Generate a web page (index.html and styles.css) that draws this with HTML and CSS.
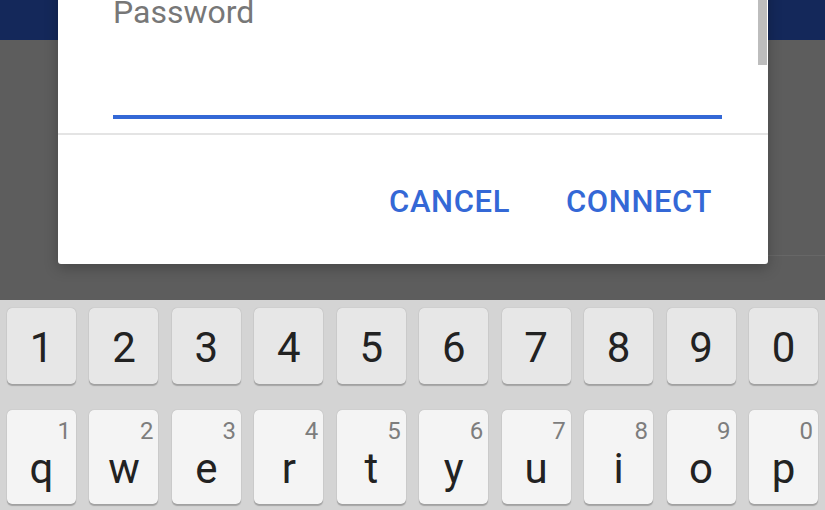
FILE: index.html
```html
<!DOCTYPE html>
<html lang="en">
<head>
  <meta charset="UTF-8" />
  <meta name="viewport" content="width=device-width, initial-scale=1.0"/>
  <title>Wi-Fi Password</title>
  <link rel="stylesheet" href="styles.css">
</head>
<body>
  <div class="screen">
    <header class="appbar"></header>
    <main class="content">
      <div class="content-rule"></div>
    </main>

    <!-- Connect dialog, floats over the dimmed page -->
    <div class="dialog">
      <div class="dialog-body">
        <label class="field-label" for="pw">Password</label>
        <div class="field-input" id="pw"></div>
      </div>
      <div class="dialog-divider"></div>
      <div class="dialog-actions">
        <button class="dialog-btn">CANCEL</button>
        <button class="dialog-btn">CONNECT</button>
      </div>
      <div class="scroll-thumb"></div>
    </div>

    <div class="keyboard">
      <div class="key-row numbers">
        <div class="key">1</div>
        <div class="key">2</div>
        <div class="key">3</div>
        <div class="key">4</div>
        <div class="key">5</div>
        <div class="key">6</div>
        <div class="key">7</div>
        <div class="key">8</div>
        <div class="key">9</div>
        <div class="key">0</div>
      </div>
      <div class="key-row letters">
        <div class="key"><span class="hint">1</span><span class="char">q</span></div>
        <div class="key"><span class="hint">2</span><span class="char">w</span></div>
        <div class="key"><span class="hint">3</span><span class="char">e</span></div>
        <div class="key"><span class="hint">4</span><span class="char">r</span></div>
        <div class="key"><span class="hint">5</span><span class="char">t</span></div>
        <div class="key"><span class="hint">6</span><span class="char">y</span></div>
        <div class="key"><span class="hint">7</span><span class="char">u</span></div>
        <div class="key"><span class="hint">8</span><span class="char">i</span></div>
        <div class="key"><span class="hint">9</span><span class="char">o</span></div>
        <div class="key"><span class="hint">0</span><span class="char">p</span></div>
      </div>
    </div>
  </div>
</body>
</html>
```

FILE: styles.css
```css
  body {
    margin: 0;
    font-family: 'Roboto', 'Noto Sans', sans-serif;
    background-color: #5d5d5d;
  }

  .screen {
    width: 825px;
    height: 510px;
    position: relative;
    overflow: hidden;
  }

  .appbar {
    height: 40px;
    background-color: #14285a;
  }

  .content {
    height: 260px;
    box-sizing: border-box;
    padding-top: 215px;
    background-color: #5d5d5d;
  }

  .content-rule {
    margin-left: 640px;
    height: 1px;
    background-color: #676767;
  }

  /* Dialog */
  .dialog {
    position: absolute;
    left: 58px;
    top: -24px;
    width: 710px;
    background-color: #fff;
    border-radius: 0 0 3px 3px;
    box-shadow: 0 4px 14px rgba(0,0,0,0.25);
  }

  .dialog-body {
    padding: 21px 46px 0 55px;
  }

  .field-label {
    display: block;
    font-size: 32px;
    line-height: 31px;
    color: #777;
  }

  .field-input {
    height: 87px;
    border-bottom: 4px solid #3468d6;
  }

  .dialog-divider {
    margin-top: 14px;
    height: 2px;
    background-color: #e4e4e4;
  }

  .dialog-actions {
    display: flex;
    justify-content: flex-end;
    gap: 56px;
    padding: 51px 56px 47px 0;
  }

  .dialog-btn {
    background: none;
    border: none;
    padding: 0;
    font-family: 'Roboto', sans-serif;
    font-weight: 500;
    font-size: 31px;
    line-height: 31px;
    letter-spacing: 0.6px;
    color: #3468d6;
  }

  .scroll-thumb {
    position: absolute;
    top: 24px;
    right: 1px;
    width: 9px;
    height: 65px;
    background-color: #bdbdbd;
  }

  /* Keyboard */
  .keyboard {
    height: 210px;
    box-sizing: border-box;
    background-color: #d4d4d4;
    padding: 8px 7px 0;
    display: flex;
    flex-direction: column;
    gap: 26px;
  }

  .key-row {
    display: grid;
    grid-template-columns: repeat(10, 1fr);
    column-gap: 13.4px;
  }

  .key {
    border-radius: 5px;
    color: #222;
    box-shadow: 0 2px 1px rgba(0,0,0,0.22), 0 0 1px rgba(0,0,0,0.25);
  }

  .numbers .key {
    height: 76px;
    box-sizing: border-box;
    padding-top: 4px;
    background-color: #e7e7e7;
    display: flex;
    justify-content: center;
    align-items: center;
    font-size: 42px;
    line-height: 42px;
  }

  .letters .key {
    height: 94px;
    box-sizing: border-box;
    padding: 9px 5px 0;
    background-color: #f4f4f4;
    display: flex;
    flex-direction: column;
  }

  .hint {
    align-self: flex-end;
    font-size: 24px;
    line-height: 24px;
    color: #7d7d7d;
  }

  .char {
    align-self: center;
    margin-top: 5px;
    font-size: 42px;
    line-height: 42px;
  }
```
